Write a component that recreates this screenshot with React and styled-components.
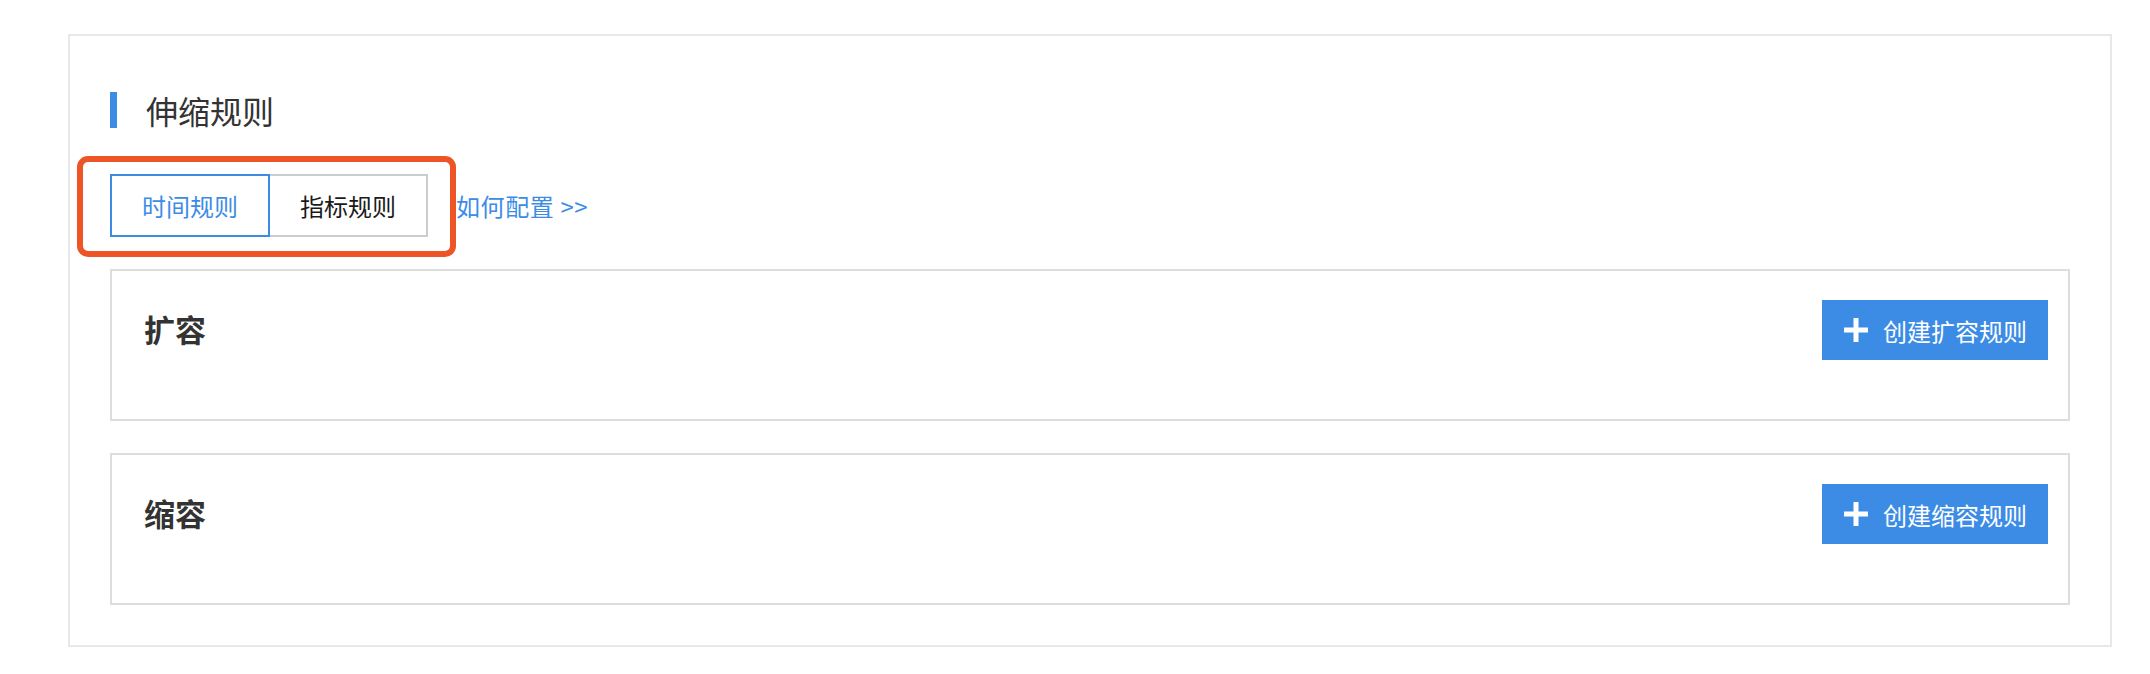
import React, { useState } from "react";
import styled, { createGlobalStyle } from "styled-components";

const GlobalStyle = createGlobalStyle`
  html, body { margin: 0; padding: 0; background: #ffffff; }
  body { font-family: "Noto Sans CJK SC", "Noto Sans", sans-serif; color: #333; }
  * { box-sizing: border-box; }
`;

const Page = styled.div`
  padding: 34px 38px 0 68px;
`;

const Panel = styled.section`
  border: 2px solid #e8e8e8;
  padding: 56px 40px 40px 40px;
  display: flex;
  flex-direction: column;
`;

const TitleRow = styled.div`
  display: flex;
  align-items: center;
  height: 36px;
`;

const TitleBar = styled.span`
  width: 7px;
  height: 36px;
  background: #3c8ce6;
`;

const Title = styled.h2`
  margin: 0 0 0 29px;
  font-size: 32px;
  line-height: 36px;
  font-weight: 400;
  color: #333;
`;

const TabRow = styled.div`
  position: relative;
  display: flex;
  align-items: center;
  margin-top: 46px;
`;

const Tab = styled.button`
  height: 63px;
  padding: 0 30px;
  font-family: inherit;
  font-size: 24px;
  background: #fff;
  cursor: pointer;
  border: 2px solid ${(p) => (p.$active ? "#3c8ce6" : "#cccccc")};
  color: ${(p) => (p.$active ? "#3c8ce6" : "#1a1a1a")};
  position: relative;
  z-index: ${(p) => (p.$active ? 1 : 0)};
  & + & {
    margin-left: -2px;
  }
`;

const HelpLink = styled.a`
  margin-left: 28px;
  font-size: 24px;
  letter-spacing: 0.6px;
  color: #3c8ce6;
  text-decoration: none;
  white-space: pre;
`;

const Highlight = styled.div`
  position: absolute;
  left: -33px;
  top: -18px;
  width: 379px;
  height: 101px;
  border: 6px solid #ee5526;
  border-radius: 11px;
  pointer-events: none;
`;

const Card = styled.div`
  border: 2px solid #dddddd;
  padding: 29px 20px 59px 32px;
  margin-top: ${(p) => p.$gap}px;
`;

const CardHeader = styled.div`
  display: flex;
  align-items: center;
  justify-content: space-between;
  height: 60px;
`;

const CardTitle = styled.h3`
  margin: 0;
  font-size: 31px;
  font-weight: 600;
  color: #333;
  position: relative;
  top: -2px;
`;

const CreateButton = styled.button`
  display: flex;
  align-items: center;
  gap: 15px;
  height: 60px;
  padding: 0 21px 0 22px;
  background: #3c8ce6;
  border: none;
  color: #fff;
  font-family: inherit;
  font-size: 24px;
  cursor: pointer;
`;

const PlusIcon = () => (
  <svg width="24" height="24" viewBox="0 0 24 24" aria-hidden="true">
    <rect x="9.5" y="0" width="5" height="24" fill="#fff" />
    <rect x="0" y="9.5" width="24" height="5" fill="#fff" />
  </svg>
);

export default function App() {
  const [tab, setTab] = useState("time");
  return (
    <>
      <GlobalStyle />
      <Page>
        <Panel>
          <TitleRow>
            <TitleBar />
            <Title>伸缩规则</Title>
          </TitleRow>
          <TabRow>
            <Tab $active={tab === "time"} onClick={() => setTab("time")}>
              时间规则
            </Tab>
            <Tab $active={tab === "metric"} onClick={() => setTab("metric")}>
              指标规则
            </Tab>
            <HelpLink href="#">如何配置 &gt;&gt;</HelpLink>
            <Highlight />
          </TabRow>
          <Card $gap={32}>
            <CardHeader>
              <CardTitle>扩容</CardTitle>
              <CreateButton>
                <PlusIcon />
                创建扩容规则
              </CreateButton>
            </CardHeader>
          </Card>
          <Card $gap={32}>
            <CardHeader>
              <CardTitle>缩容</CardTitle>
              <CreateButton>
                <PlusIcon />
                创建缩容规则
              </CreateButton>
            </CardHeader>
          </Card>
        </Panel>
      </Page>
    </>
  );
}
